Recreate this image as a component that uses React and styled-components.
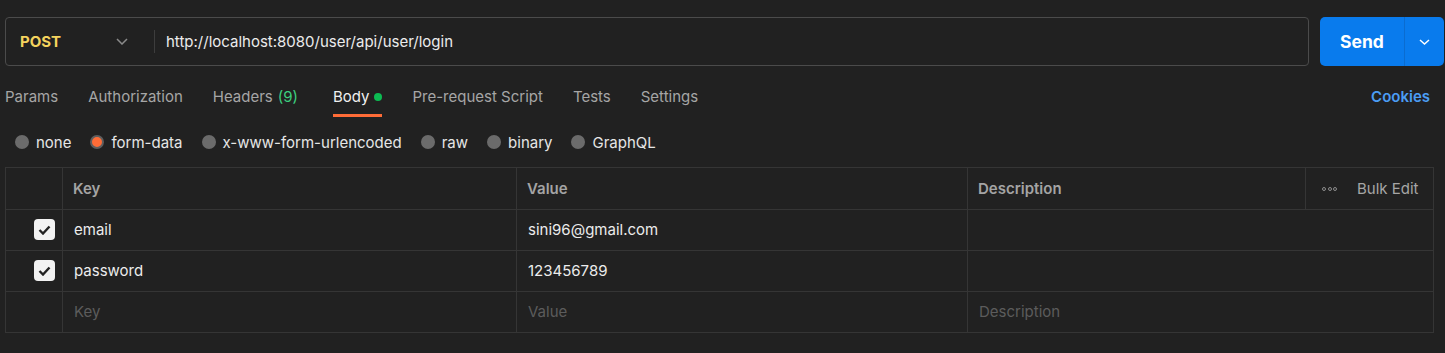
import styled, { createGlobalStyle } from "styled-components";

const GlobalStyle = createGlobalStyle`
  html, body {
    margin: 0;
    padding: 0;
    background: #212121;
  }
  body {
    font-family: Inter, "Noto Sans", sans-serif;
    font-size: 15px;
    color: #e6e6e6;
  }
`;

const Page = styled.div`
  padding: 17px 1px 0 5px;
  height: 336px;
  background: #212121;
`;

// request bar: method + url + send

const RequestBar = styled.div`
  display: flex;
  gap: 11px;
  height: 49px;
`;

const UrlBox = styled.div`
  flex: 1;
  display: flex;
  align-items: center;
  border: 1px solid #4b4b4b;
  border-radius: 4px;
  box-sizing: border-box;
`;

const MethodSelect = styled.div`
  display: flex;
  align-items: center;
  width: 148px;
  padding-left: 14px;
  box-sizing: border-box;
  height: 100%;
`;

const MethodName = styled.span`
  color: #f4d35e;
  font-weight: 700;
  font-size: 15px;
  flex: 1;
`;

const Chevron = styled.svg`
  width: 12px;
  height: 7px;
  margin-right: 26px;
`;

const Divider = styled.div`
  width: 1px;
  height: 23px;
  background: #3d3d3d;
`;

const UrlText = styled.span`
  margin-left: 11px;
  color: #ececec;
  font-size: 15px;
`;

const SendButton = styled.div`
  display: flex;
  width: 124px;
  height: 49px;
  background: #097bed;
  border-radius: 5px;
  color: #fff;
`;

const SendLabel = styled.div`
  width: 84px;
  display: flex;
  align-items: center;
  justify-content: center;
  font-weight: 700;
  font-size: 17.5px;
  border-right: 1px solid #0a6cd0;
`;

const SendMenu = styled.div`
  flex: 1;
  display: flex;
  align-items: center;
  justify-content: center;
`;

// tabs

const TabBar = styled.div`
  display: flex;
  align-items: stretch;
  height: 40px;
  margin-top: 11px;
  padding-right: 14px;
`;

const Tabs = styled.div`
  display: flex;
  gap: 30px;
  flex: 1;
`;

const Tab = styled.div`
  position: relative;
  display: flex;
  align-items: center;
  gap: 5px;
  padding-bottom: 1px;
  color: ${(p) => (p.$active ? "#f0f0f0" : "#a6a6a6")};
  font-size: 15px;
  white-space: nowrap;

  &::after {
    content: "";
    display: ${(p) => (p.$active ? "block" : "none")};
    position: absolute;
    left: 0;
    right: 0;
    bottom: 0;
    height: 3px;
    background: #ff6c37;
  }
`;

const Count = styled.span`
  color: #3ccf7f;
  margin-right: 5px;
`;

const Dot = styled.span`
  width: 8px;
  height: 8px;
  border-radius: 50%;
  background: #0cbb52;
`;

const CookiesLink = styled.div`
  display: flex;
  align-items: center;
  padding-bottom: 1px;
  color: #4b9df5;
  font-weight: 600;
  font-size: 15px;
`;

// body type radios

const RadioRow = styled.div`
  display: flex;
  align-items: center;
  height: 28px;
  margin-top: 11px;
  padding-left: 10px;
`;

const RadioOption = styled.label`
  display: flex;
  align-items: center;
  gap: 7px;
  margin-right: 19px;
  color: #e6e6e6;
  font-size: 15px;
`;

const RadioDot = styled.span`
  width: 14px;
  height: 14px;
  border-radius: 50%;
  box-sizing: border-box;
  background: ${(p) => (p.$checked ? "#ff6c37" : "#6b6b6b")};
  border: ${(p) => (p.$checked ? "2px solid #5e5e5e" : "none")};
`;

// params table

const Table = styled.div`
  margin-top: 11px;
  width: 1429px;
  border: 1px solid #353535;
  box-sizing: border-box;
`;

const Row = styled.div`
  display: grid;
  grid-template-columns: 56px 454px 451px 338px 1fr;
  height: 41px;
  box-sizing: border-box;
  border-top: ${(p) => (p.$first ? "none" : "1px solid #353535")};
`;

const Cell = styled.div`
  display: flex;
  align-items: center;
  padding: ${(p) => (p.$head ? "0 10px" : "0 11px 2px")};
  border-left: 1px solid #353535;
  grid-column: ${(p) => (p.$span ? `span ${p.$span}` : "auto")};
  color: ${(p) =>
    p.$head ? "#a4a4a4" : p.$placeholder ? "#5c5c5c" : "#ececec"};
  font-weight: ${(p) => (p.$head ? 600 : 400)};
  font-size: 15px;
  white-space: nowrap;
`;

const CheckCell = styled.div`
  display: flex;
  align-items: center;
  justify-content: flex-end;
  padding: 0 7px 1px 0;
`;

const CheckBox = styled.span`
  width: 21px;
  height: 21px;
  border-radius: 4px;
  background: #f2f2f2;
  display: flex;
  align-items: center;
  justify-content: center;
`;

const BulkCell = styled.div`
  display: flex;
  align-items: center;
  gap: 20px;
  padding-left: 16px;
  border-left: 1px solid #353535;
  color: #a6a6a6;
  font-size: 15px;
  white-space: nowrap;
`;

const Dots = styled.span`
  display: flex;
  gap: 1.5px;

  & > i {
    width: 2px;
    height: 2px;
    border-radius: 50%;
    border: 1px solid #8c8c8c;
  }
`;

const ChevronDown = ({ color }) => (
  <Chevron viewBox="0 0 12 7" fill="none">
    <path d="M1 1l5 5 5-5" stroke={color} strokeWidth="1.5" />
  </Chevron>
);

const Check = () => (
  <svg width="13" height="10" viewBox="0 0 13 10" fill="none">
    <path d="M1.5 5l3.5 3.5L11.5 1.5" stroke="#222" strokeWidth="2.4" />
  </svg>
);

const tabs = [
  "Params",
  "Authorization",
  "Headers",
  "Body",
  "Pre-request Script",
  "Tests",
  "Settings",
];

const radios = [
  "none",
  "form-data",
  "x-www-form-urlencoded",
  "raw",
  "binary",
  "GraphQL",
];

const params = [
  { key: "email", value: "sini96@gmail.com" },
  { key: "password", value: "123456789" },
];

export default function App() {
  return (
    <>
      <GlobalStyle />
      <Page>
        <RequestBar>
          <UrlBox>
            <MethodSelect>
              <MethodName>POST</MethodName>
              <ChevronDown color="#8a8a8a" />
            </MethodSelect>
            <Divider />
            <UrlText>http://localhost:8080/user/api/user/login</UrlText>
          </UrlBox>
          <SendButton>
            <SendLabel>Send</SendLabel>
            <SendMenu>
              <svg width="11" height="6" viewBox="0 0 11 6" fill="none">
                <path d="M1 1l4.5 4 4.5-4" stroke="#fff" strokeWidth="1.5" />
              </svg>
            </SendMenu>
          </SendButton>
        </RequestBar>

        <TabBar>
          <Tabs>
            {tabs.map((t) => (
              <Tab key={t} $active={t === "Body"}>
                {t}
                {t === "Headers" && <Count>(9)</Count>}
                {t === "Body" && <Dot />}
              </Tab>
            ))}
          </Tabs>
          <CookiesLink>Cookies</CookiesLink>
        </TabBar>

        <RadioRow>
          {radios.map((r) => (
            <RadioOption key={r}>
              <RadioDot $checked={r === "form-data"} />
              {r}
            </RadioOption>
          ))}
        </RadioRow>

        <Table>
          <Row $first>
            <CheckCell />
            <Cell $head>Key</Cell>
            <Cell $head>Value</Cell>
            <Cell $head>Description</Cell>
            <BulkCell>
              <Dots>
                <i />
                <i />
                <i />
              </Dots>
              Bulk Edit
            </BulkCell>
          </Row>
          {params.map((p) => (
            <Row key={p.key}>
              <CheckCell>
                <CheckBox>
                  <Check />
                </CheckBox>
              </CheckCell>
              <Cell>{p.key}</Cell>
              <Cell>{p.value}</Cell>
              <Cell $span={2} />
            </Row>
          ))}
          <Row>
            <CheckCell />
            <Cell $placeholder>Key</Cell>
            <Cell $placeholder>Value</Cell>
            <Cell $placeholder $span={2}>
              Description
            </Cell>
          </Row>
        </Table>
      </Page>
    </>
  );
}
